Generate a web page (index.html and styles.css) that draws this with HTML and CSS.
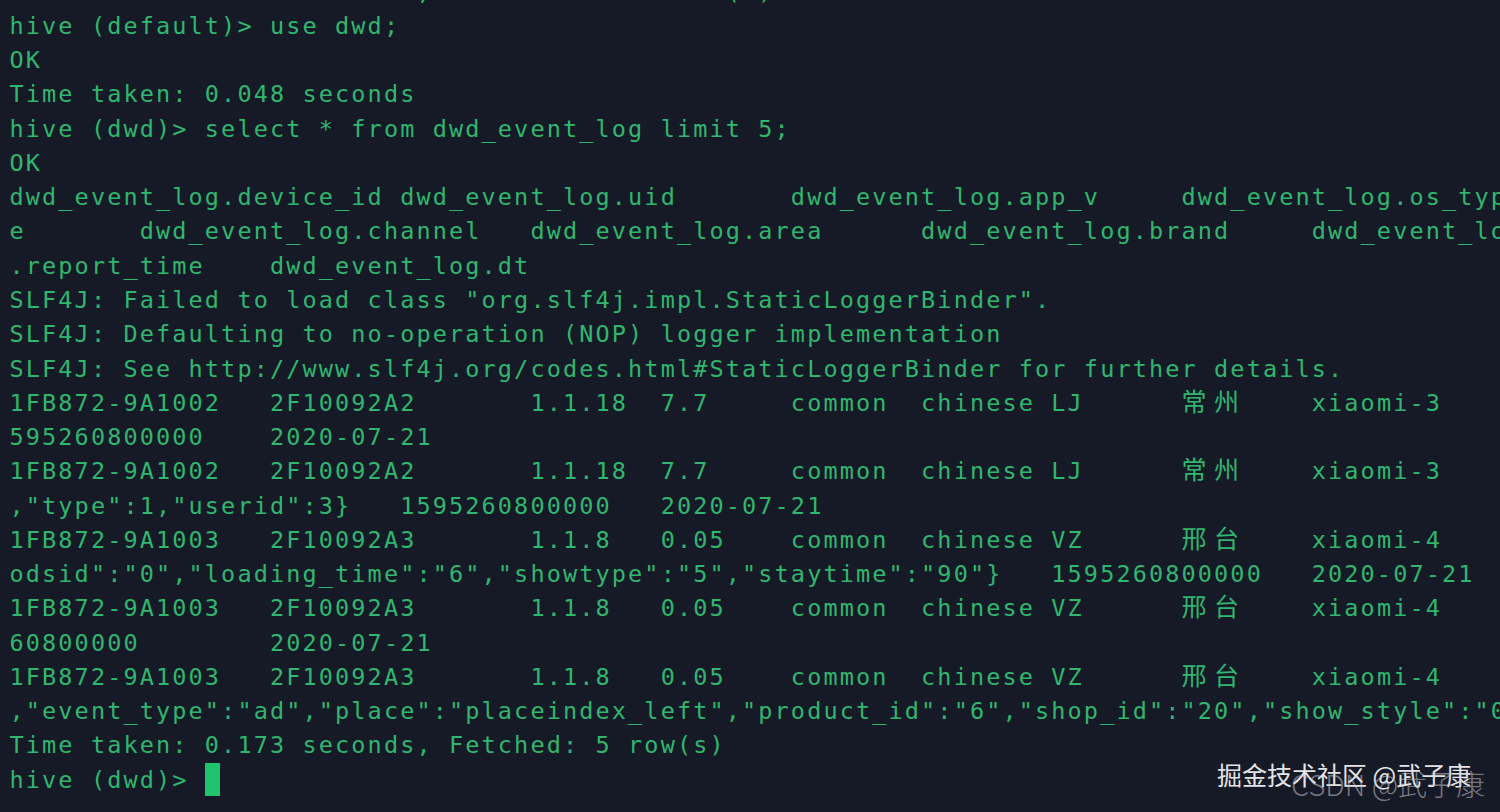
FILE: index.html
```html
<!DOCTYPE html>
<html lang="zh">
<head>
<meta charset="utf-8">
<title>hive terminal</title>
<link rel="stylesheet" href="styles.css">
</head>
<body>
<div class="term">
<div class="line">Time taken: 1.642 seconds, Fetched: 4035 row(s)</div>
<div class="line">hive (default)&gt; use dwd;</div>
<div class="line">OK</div>
<div class="line">Time taken: 0.048 seconds</div>
<div class="line">hive (dwd)&gt; select * from dwd_event_log limit 5;</div>
<div class="line">OK</div>
<div class="line">dwd_event_log.device_id dwd_event_log.uid       dwd_event_log.app_v     dwd_event_log.os_type</div>
<div class="line">e       dwd_event_log.channel   dwd_event_log.area      dwd_event_log.brand     dwd_event_log.event_json</div>
<div class="line">.report_time    dwd_event_log.dt</div>
<div class="line">SLF4J: Failed to load class "org.slf4j.impl.StaticLoggerBinder".</div>
<div class="line">SLF4J: Defaulting to no-operation (NOP) logger implementation</div>
<div class="line">SLF4J: See http://www.slf4j.org/codes.html#StaticLoggerBinder for further details.</div>
<div class="line">1FB872-9A1002   2F10092A2       1.1.18  7.7     common  chinese LJ      <span class="cjk">常州</span>    xiaomi-3</div>
<div class="line">595260800000    2020-07-21</div>
<div class="line">1FB872-9A1002   2F10092A2       1.1.18  7.7     common  chinese LJ      <span class="cjk">常州</span>    xiaomi-3</div>
<div class="line">,"type":1,"userid":3}   1595260800000   2020-07-21</div>
<div class="line">1FB872-9A1003   2F10092A3       1.1.8   0.05    common  chinese VZ      <span class="cjk">邢台</span>    xiaomi-4</div>
<div class="line">odsid":"0","loading_time":"6","showtype":"5","staytime":"90"}   1595260800000   2020-07-21</div>
<div class="line">1FB872-9A1003   2F10092A3       1.1.8   0.05    common  chinese VZ      <span class="cjk">邢台</span>    xiaomi-4</div>
<div class="line">60800000        2020-07-21</div>
<div class="line">1FB872-9A1003   2F10092A3       1.1.8   0.05    common  chinese VZ      <span class="cjk">邢台</span>    xiaomi-4</div>
<div class="line">,"event_type":"ad","place":"placeindex_left","product_id":"6","shop_id":"20","show_style":"0"}</div>
<div class="line">Time taken: 0.173 seconds, Fetched: 5 row(s)</div>
<div class="line">hive (dwd)&gt; <span class="cursor"></span></div>
</div>
<div class="wm wm-juejin">掘金技术社区 @武子康</div>
<div class="wm wm-csdn">CSDN @武子康</div>
</body>
</html>
```
FILE: styles.css
```css
html, body {
  margin: 0;
  padding: 0;
  width: 1500px;
  height: 812px;
  overflow: hidden;
  background: #161a27;
}

body {
  position: relative;
}

.term {
  margin-top: -25.4px;
  padding-left: 9.5px;
  font-family: "DejaVu Sans Mono", "Liberation Mono", monospace;
  font-size: 23.5px;
  letter-spacing: 2.13px;
  color: #30b66e;
}

.line {
  height: 34.27px;
  line-height: 34.27px;
  white-space: pre;
}

.cjk {
  font-family: "Noto Sans CJK SC", sans-serif;
  font-size: 25px;
  letter-spacing: 7.56px;
  line-height: 1;
}

.cursor {
  display: inline-block;
  width: 15px;
  height: 33px;
  background: #1fc46d;
  vertical-align: -8px;
}

.wm {
  position: absolute;
  font-family: "Noto Sans CJK SC", "Noto Sans", sans-serif;
  white-space: nowrap;
}

.wm-juejin {
  left: 1217px;
  top: 757px;
  font-size: 25px;
  line-height: 34px;
  color: #e4e4e6;
}

.wm-csdn {
  left: 1291px;
  top: 764px;
  font-size: 29px;
  line-height: 38px;
  font-weight: 300;
  color: rgba(200, 200, 205, 0.55);
}
```
